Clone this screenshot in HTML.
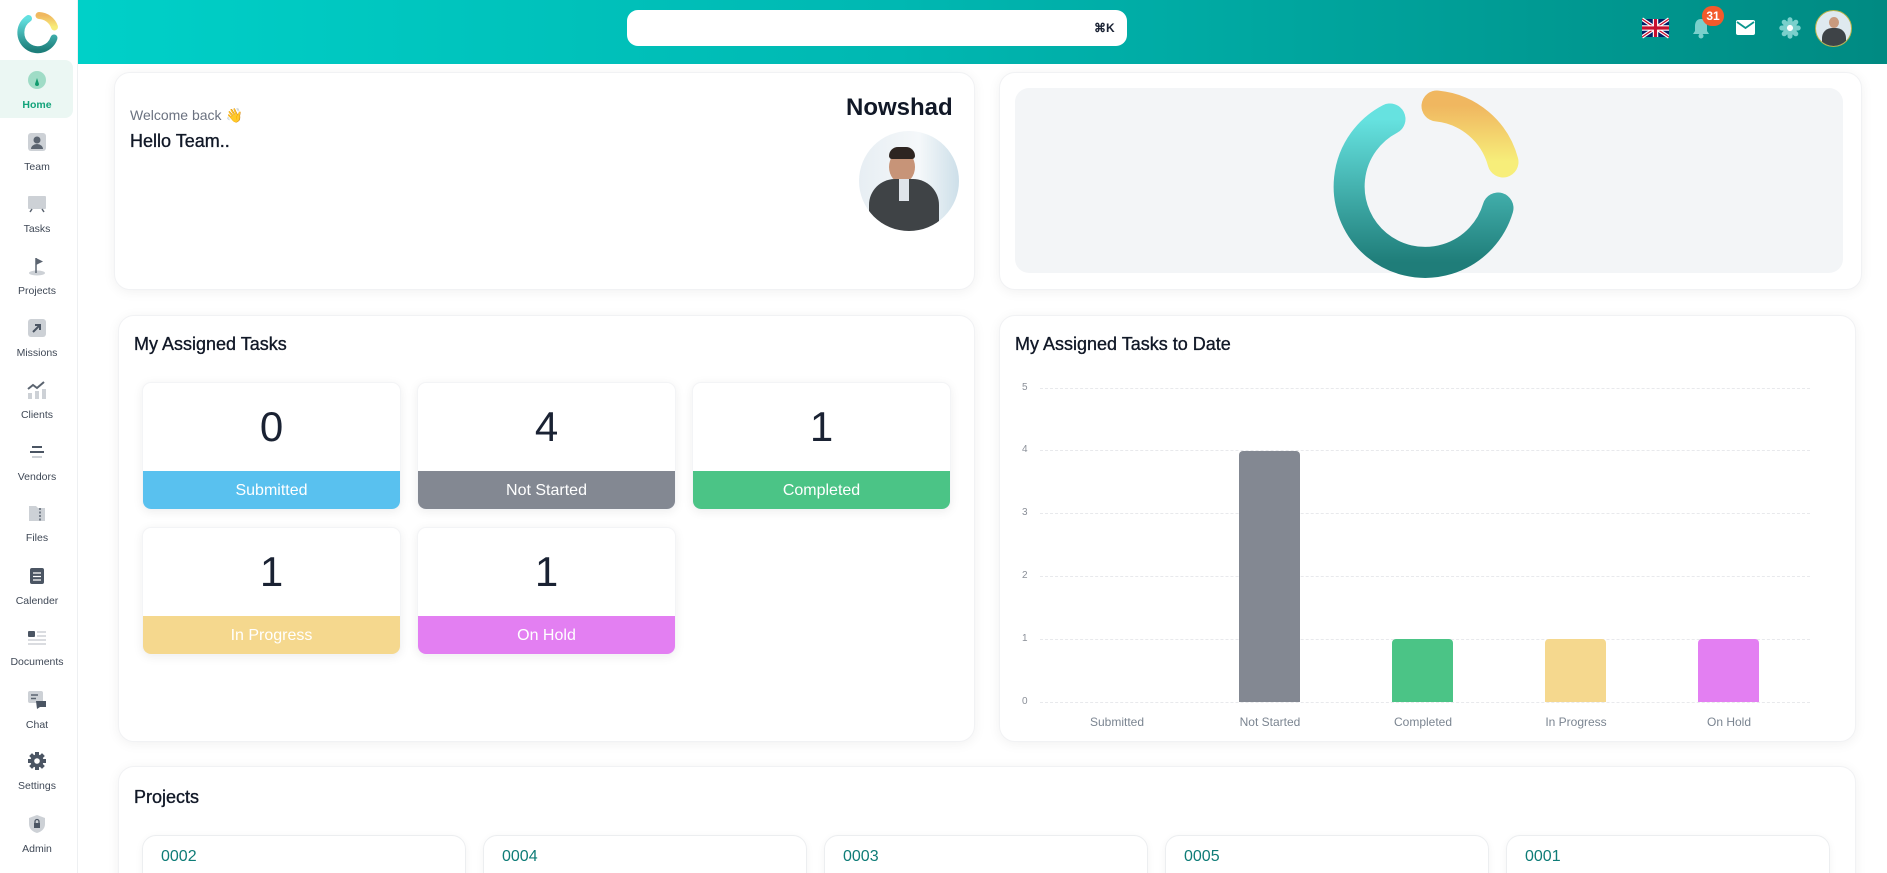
<!DOCTYPE html>
<html style="width:1887px;height:873px;overflow:hidden"><head><meta charset="utf-8"><style>
*{box-sizing:border-box;margin:0;padding:0}
body{width:1887px;height:873px;overflow:hidden;background:#fff;font-family:"Liberation Sans",sans-serif;position:relative;color:#1a2233}
.abs{position:absolute}
.side{left:0;top:0;width:78px;height:873px;background:#fff;border-right:1px solid #eef0f2}
.nav{position:absolute;left:0;width:74px;text-align:center;font-size:10.5px;color:#3f4856}
.nav .ic{width:20px;height:20px;margin:0 auto 9px;}
.hdr{left:78px;top:0;width:1809px;height:64px;background:linear-gradient(90deg,#00d0c8 0%,#00b8b2 45%,#008a82 100%)}
.card{position:absolute;background:#fff;border-radius:16px;box-shadow:0 2px 12px rgba(0,0,0,.06);border:1px solid #f1f2f4}
.tile{position:absolute;width:259px;height:128px;border-radius:9px;background:#fff;box-shadow:0 2px 10px rgba(0,0,0,.07);overflow:hidden;border:1px solid #f3f4f6}
.tile .n{height:88px;line-height:88px;text-align:center;font-size:42px;font-weight:300;color:#1a2233}
.tile .l{height:40px;line-height:40px;text-align:center;color:#fff;font-size:16px}
.grid{position:absolute;left:1040px;width:770px;border-top:1px dashed #e8e9ec}
.yl{position:absolute;left:1022px;font-size:10px;color:#8a8f98}
.bar{position:absolute;width:61px;border-radius:4px 4px 0 0}
.xl{position:absolute;top:715px;width:140px;text-align:center;font-size:12px;color:#7b8591}
.chip{position:absolute;top:835px;width:324px;height:60px;border-radius:14px;border:1px solid #eceef0;box-shadow:0 2px 8px rgba(0,0,0,.05);padding:12px 18px;color:#0e7c77;font-size:16px}
.ttl{position:absolute;font-size:18px;color:#111827;-webkit-text-stroke:0.35px #111827}
</style></head><body>

<div class="abs side">
 <svg class="abs" style="left:14px;top:8px" width="48" height="48" viewBox="0 0 48 48">
  <defs><linearGradient id="t1" x1="0" y1="0" x2="0" y2="1"><stop offset="0" stop-color="#62e0e0"/><stop offset="1" stop-color="#1e7f7b"/></linearGradient>
  <linearGradient id="y1" x1="0" y1="0" x2="0" y2="1"><stop offset="0" stop-color="#f0b860"/><stop offset="1" stop-color="#f7ec7a"/></linearGradient></defs>
  <path d="M14.5 10.5 A17 17 0 1 0 40 30" fill="none" stroke="url(#t1)" stroke-width="7" stroke-linecap="round"/>
  <path d="M25 7.5 A17 17 0 0 1 40.5 19" fill="none" stroke="url(#y1)" stroke-width="7" stroke-linecap="round"/>
 </svg>
 <div class="abs" style="left:0;top:60px;width:73px;height:58px;background:#ebf7f3;border-radius:0 8px 8px 0"></div>
 <div class="nav" style="top:70px;color:#12a37a;font-weight:bold">
  <svg class="ic" viewBox="0 0 20 20" style="display:block"><circle cx="10" cy="10" r="9" fill="#9fdcc6"/><path d="M10 8 L12 14 a2 2 0 0 1-4 0z" fill="#119b6e"/></svg>Home</div>
 <div class="nav" style="top:132px"><svg class="ic" viewBox="0 0 20 20" style="display:block"><rect x="1" y="1" width="18" height="18" rx="3" fill="#cdd1d6"/><circle cx="10" cy="8" r="3.5" fill="#5b6470"/><path d="M4 17 a6 5 0 0 1 12 0z" fill="#5b6470"/></svg>Team</div>
 <div class="nav" style="top:194px"><svg class="ic" viewBox="0 0 20 20" style="display:block"><rect x="1" y="2" width="18" height="13" rx="1" fill="#cdd1d6"/><path d="M3 18 l2-3 M17 18 l-2-3" stroke="#5b6470" stroke-width="1.5"/></svg>Tasks</div>
 <div class="nav" style="top:256px"><svg class="ic" viewBox="0 0 20 20" style="display:block"><ellipse cx="10" cy="17" rx="8" ry="2.5" fill="#cdd1d6"/><path d="M9 17V2" stroke="#5b6470" stroke-width="1.5"/><path d="M9 2l7 3.5-7 3.5z" fill="#5b6470"/></svg>Projects</div>
 <div class="nav" style="top:318px"><svg class="ic" viewBox="0 0 20 20" style="display:block"><rect x="1" y="1" width="18" height="18" rx="3" fill="#cdd1d6"/><path d="M6 14 L13 7 M8 7h5v5" stroke="#4b5563" stroke-width="2" fill="none"/></svg>Missions</div>
 <div class="nav" style="top:380px"><svg class="ic" viewBox="0 0 20 20" style="display:block"><rect x="1" y="13" width="4" height="6" fill="#cdd1d6"/><rect x="8" y="11" width="4" height="8" fill="#cdd1d6"/><rect x="15" y="9" width="4" height="10" fill="#cdd1d6"/><path d="M1 9 l5-4 4 3 7-6" stroke="#5b6470" stroke-width="2" fill="none"/></svg>Clients</div>
 <div class="nav" style="top:442px"><svg class="ic" viewBox="0 0 20 20" style="display:block"><path d="M5 5h10M3 10h14" stroke="#4b5563" stroke-width="2"/><path d="M5 15h10" stroke="#cdd1d6" stroke-width="2"/></svg>Vendors</div>
 <div class="nav" style="top:503px"><svg class="ic" viewBox="0 0 20 20" style="display:block"><path d="M2 3h7l2 2h7v13H2z" fill="#cdd1d6"/><path d="M13 5v13" stroke="#5b6470" stroke-dasharray="2 1.5" stroke-width="1.5"/></svg>Files</div>
 <div class="nav" style="top:566px"><svg class="ic" viewBox="0 0 20 20" style="display:block"><rect x="3" y="2" width="14" height="16" rx="2" fill="#4b5563"/><path d="M6 7h8M6 10.5h8M6 14h8" stroke="#fff" stroke-width="1.3"/></svg>Calender</div>
 <div class="nav" style="top:627px"><svg class="ic" viewBox="0 0 20 20" style="display:block"><rect x="1" y="4" width="7" height="6" rx="1" fill="#4b5563"/><path d="M10 5h9M10 9h9M1 13h18M1 17h18" stroke="#cdd1d6" stroke-width="1.4"/></svg>Documents</div>
 <div class="nav" style="top:690px"><svg class="ic" viewBox="0 0 20 20" style="display:block"><rect x="1" y="1" width="15" height="12" rx="2" fill="#cdd1d6"/><path d="M4 5h7M4 8.5h5" stroke="#5b6470" stroke-width="1.4"/><path d="M9 11h10v6h-6l-3 2z" fill="#4b5563"/></svg>Chat</div>
 <div class="nav" style="top:751px"><svg class="ic" viewBox="0 0 20 20" style="display:block"><circle cx="10" cy="10" r="6.5" fill="#4b5563"/><g stroke="#4b5563" stroke-width="4"><path d="M10 1v18M1 10h18M3.6 3.6l12.8 12.8M16.4 3.6L3.6 16.4"/></g><circle cx="10" cy="10" r="2.8" fill="#fff"/></svg>Settings</div>
 <div class="nav" style="top:814px"><svg class="ic" viewBox="0 0 20 20" style="display:block"><path d="M10 1 L18 4 V10 C18 15 14 18 10 19 C6 18 2 15 2 10 V4z" fill="#cdd1d6"/><rect x="7" y="9" width="6" height="5" fill="#4b5563"/><path d="M8 9V7.5a2 2 0 0 1 4 0V9" stroke="#4b5563" fill="none" stroke-width="1.3"/></svg>Admin</div>
</div>

<div class="abs hdr"></div>
<div class="abs" style="left:627px;top:10px;width:500px;height:36px;background:#fff;border-radius:11px"></div>
<div class="abs" style="left:1094px;top:21px;font-size:12px;font-weight:bold;color:#1a2233">⌘K</div>
<svg class="abs" style="left:1642px;top:17px" width="27" height="22" viewBox="0 0 60 40"><rect width="60" height="40" rx="6" fill="#012169"/><path d="M0 0L60 40M60 0L0 40" stroke="#fff" stroke-width="8"/><path d="M0 0L60 40M60 0L0 40" stroke="#c8102e" stroke-width="3"/><path d="M30 0v40M0 20h60" stroke="#fff" stroke-width="12"/><path d="M30 0v40M0 20h60" stroke="#c8102e" stroke-width="7"/></svg>
<svg class="abs" style="left:1691px;top:17px" width="20" height="22" viewBox="0 0 20 22"><path d="M10 2c-4 0-6 3-6 7v5l-2 3h16l-2-3V9c0-4-2-7-6-7z" fill="#7ad0cc"/><circle cx="10" cy="19" r="2.5" fill="#7ad0cc"/></svg>
<div class="abs" style="left:1702px;top:6px;width:22px;height:20px;border-radius:10px;background:#f35a2b;color:#fff;font-size:12px;font-weight:bold;text-align:center;line-height:20px">31</div>
<svg class="abs" style="left:1736px;top:20px" width="19" height="15" viewBox="0 0 19 15"><rect width="19" height="15" rx="2" fill="#fff"/><path d="M1 2l8.5 6 8.5-6" stroke="#0a958d" stroke-width="1.8" fill="none"/></svg>
<svg class="abs" style="left:1779px;top:17px" width="22" height="22" viewBox="0 0 20 20"><circle cx="10" cy="10" r="6.5" fill="#7ad0cc"/><g stroke="#7ad0cc" stroke-width="4.5" stroke-linecap="round"><path d="M10 2.5v15M2.5 10h15M4.7 4.7l10.6 10.6M15.3 4.7L4.7 15.3"/></g><circle cx="10" cy="10" r="2.8" fill="#fff"/></svg>
<div class="abs" style="left:1815px;top:10px;width:37px;height:37px;border-radius:50%;border:1.5px solid #b7b34a;background:#dfe9ef;overflow:hidden">
 <div class="abs" style="left:13px;top:6px;width:10px;height:11px;border-radius:50%;background:#c99a7e"></div>
 <div class="abs" style="left:6px;top:17px;width:24px;height:20px;border-radius:10px 10px 0 0;background:#3e4347"></div>
</div>

<div class="card" style="left:114px;top:72px;width:861px;height:218px"></div>
<div class="abs" style="left:130px;top:107px;font-size:14px;color:#6b7280">Welcome back 👋</div>
<div class="ttl" style="left:130px;top:131px">Hello Team..</div>
<div class="abs" style="left:846px;top:94px;font-size:24px;font-weight:bold;color:#111827">Nowshad</div>
<div class="abs" style="left:859px;top:131px;width:100px;height:100px;border-radius:50%;overflow:hidden;background:linear-gradient(90deg,#e7eef3,#f5f8fa 60%,#cddfe9)">
 <div class="abs" style="left:30px;top:20px;width:26px;height:32px;border-radius:50%;background:#c79478"></div>
 <div class="abs" style="left:30px;top:16px;width:26px;height:12px;border-radius:12px 12px 4px 4px;background:#2e2521"></div>
 <div class="abs" style="left:10px;top:48px;width:70px;height:60px;border-radius:26px 26px 0 0;background:#3f4346"></div>
 <div class="abs" style="left:40px;top:48px;width:10px;height:22px;background:#dfe4ea"></div>
</div>

<div class="card" style="left:999px;top:72px;width:863px;height:218px"></div>
<div class="abs" style="left:1015px;top:88px;width:828px;height:185px;background:#f3f5f7;border-radius:14px"></div>
<svg class="abs" style="left:1330px;top:82px" width="200" height="200" viewBox="0 0 200 200">
 <defs><linearGradient id="t2" x1="0" y1="0" x2="0" y2="1"><stop offset="0" stop-color="#66e2e0"/><stop offset="1" stop-color="#1f7d79"/></linearGradient>
 <linearGradient id="y2" x1="0" y1="0" x2="0" y2="1"><stop offset="0" stop-color="#f0b760"/><stop offset="1" stop-color="#f7ee7a"/></linearGradient></defs>
 <path d="M60 37 A76 76 0 1 0 168 126" fill="none" stroke="url(#t2)" stroke-width="31" stroke-linecap="round"/>
 <path d="M107 24 A76 76 0 0 1 173 80" fill="none" stroke="url(#y2)" stroke-width="31" stroke-linecap="round"/>
</svg>

<div class="card" style="left:118px;top:315px;width:857px;height:427px"></div>
<div class="ttl" style="left:134px;top:334px">My Assigned Tasks</div>
<div class="tile" style="left:142px;top:382px"><div class="n">0</div><div class="l" style="background:#59c1ef">Submitted</div></div>
<div class="tile" style="left:417px;top:382px"><div class="n">4</div><div class="l" style="background:#838892">Not Started</div></div>
<div class="tile" style="left:692px;top:382px"><div class="n">1</div><div class="l" style="background:#4bc486">Completed</div></div>
<div class="tile" style="left:142px;top:527px"><div class="n">1</div><div class="l" style="background:#f5d88e">In Progress</div></div>
<div class="tile" style="left:417px;top:527px"><div class="n">1</div><div class="l" style="background:#e37ff2">On Hold</div></div>

<div class="card" style="left:999px;top:315px;width:857px;height:427px"></div>
<div class="ttl" style="left:1015px;top:334px">My Assigned Tasks to Date</div>
<div class="grid" style="top:388px"></div><div class="grid" style="top:450px"></div><div class="grid" style="top:513px"></div>
<div class="grid" style="top:576px"></div><div class="grid" style="top:639px"></div><div class="grid" style="top:702px"></div>
<div class="yl" style="top:382px">5</div><div class="yl" style="top:444px">4</div><div class="yl" style="top:507px">3</div>
<div class="yl" style="top:570px">2</div><div class="yl" style="top:633px">1</div><div class="yl" style="top:696px">0</div>
<div class="bar" style="left:1239px;top:451px;height:251px;background:#838892"></div>
<div class="bar" style="left:1392px;top:639px;height:63px;background:#4bc486"></div>
<div class="bar" style="left:1545px;top:639px;height:63px;background:#f5d88e"></div>
<div class="bar" style="left:1698px;top:639px;height:63px;background:#e37ff2"></div>
<div class="xl" style="left:1047px">Submitted</div>
<div class="xl" style="left:1200px">Not Started</div>
<div class="xl" style="left:1353px">Completed</div>
<div class="xl" style="left:1506px">In Progress</div>
<div class="xl" style="left:1659px">On Hold</div>

<div class="card" style="left:118px;top:766px;width:1738px;height:130px"></div>
<div class="ttl" style="left:134px;top:787px">Projects</div>
<div class="chip" style="left:142px">0002</div>
<div class="chip" style="left:483px">0004</div>
<div class="chip" style="left:824px">0003</div>
<div class="chip" style="left:1165px">0005</div>
<div class="chip" style="left:1506px">0001</div>
</body></html>
